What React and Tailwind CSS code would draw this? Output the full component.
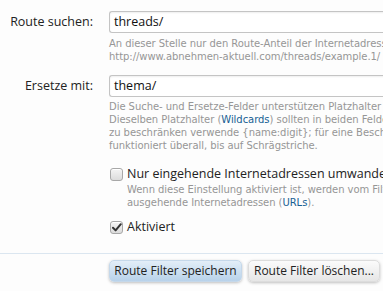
import React from "react";

const labelFont = { fontFamily: '"Open Sans", "Noto Sans", sans-serif' };

function Box({ checked }) {
  return (
    <span className="relative inline-flex h-[13px] w-[13px] shrink-0 items-center justify-center rounded-[3px] border border-[#a8a8a8] bg-gradient-to-b from-[#f4f4f4] to-[#dcdcdc] shadow-[inset_0_1px_0_#fff]">
      {checked && (
        <svg width="10" height="9" viewBox="0 0 10 9" className="absolute left-[1px] top-[1px]">
          <path d="M1 4.8 L3.6 7.4 L8.8 1.2" fill="none" stroke="#333" strokeWidth="2" strokeLinecap="round" strokeLinejoin="round" />
        </svg>
      )}
    </span>
  );
}

function Row({ label, value, children, className }) {
  return (
    <div className={"flex " + className}>
      <div className="w-[109px] shrink-0 pr-[16px] text-right text-[12.5px] leading-[22px] text-[#222]" style={labelFont}>
        {label}
      </div>
      <div className="min-w-0 flex-1">
        <div className="h-[22px] w-[300px] rounded-l-[3px] border border-r-0 border-[#c4c4c4] bg-white pl-[4px] text-[12.5px] leading-[20px] text-[#111] shadow-[inset_0_1px_2px_#eee]" style={labelFont}>
          {value}
        </div>
        {children}
      </div>
    </div>
  );
}

export default function App() {
  const hint = "whitespace-nowrap text-[10px] leading-[13px] tracking-[-0.05px] text-[#969696] font-['DejaVu_Sans',sans-serif]";
  return (
    <div className="h-[291px] w-[383px] overflow-hidden bg-[#fdfdfd]">
      <Row label="Route suchen:" value="threads/" className="pt-[11px]">
        <div className={hint + " mt-[4px]"}>
          <div>An dieser Stelle nur den Route-Anteil der Internetadresse eingeben.</div>
          <div>http://www.abnehmen-aktuell.com/threads/example.1/</div>
        </div>
      </Row>
      <Row label="Ersetze mit:" value="thema/" className="mt-[12px]">
        <div className={hint + " mt-[3px]"}>
          <div>Die Suche- und Ersetze-Felder unterstützen Platzhalter wie {"{name}"}.</div>
          <div>
            Dieselben Platzhalter (<span className="text-[#176093]">Wildcards</span>) sollten in beiden Feldern stehen.
          </div>
          <div>zu beschränken verwende {"{name:digit}"}; für eine Beschränkung</div>
          <div>funktioniert überall, bis auf Schrägstriche.</div>
        </div>
      </Row>
      <div className="mt-[14px] pl-[110px]">
        <div className="flex h-[17px] items-center gap-[4px] whitespace-nowrap text-[12.5px] text-[#222]" style={labelFont}>
          <Box />
          <span>Nur eingehende Internetadressen umwandeln</span>
        </div>
        <div className={hint + " pl-[17px]"}>
          <div>Wenn diese Einstellung aktiviert ist, werden vom Filter nur</div>
          <div>
            ausgehende Internetadressen (<span className="text-[#176093]">URLs</span>).
          </div>
        </div>
        <div className="mt-[10px] flex h-[17px] items-center gap-[4px] text-[12.5px] text-[#222]" style={labelFont}>
          <Box checked />
          <span>Aktiviert</span>
        </div>
      </div>
      <div className="mt-[17px] border-t border-[#dbe6f0]" />
      <div className="flex gap-[6px] pl-[109px] pt-[6px] text-[12px] text-[#222]" style={labelFont}>
        <button className="h-[22px] w-[133px] rounded-[5px] border border-[#c5d8ea] bg-gradient-to-b from-[#e3eef8] to-[#b8d2ea] shadow-[0_1px_3px_rgba(0,0,0,0.25)]">
          Route Filter speichern
        </button>
        <button className="h-[22px] w-[132px] rounded-[5px] border border-[#dcdcdc] bg-gradient-to-b from-[#fbfbfb] to-[#e6e6e6] shadow-[0_1px_3px_rgba(0,0,0,0.25)]">
          Route Filter löschen...
        </button>
      </div>
    </div>
  );
}
